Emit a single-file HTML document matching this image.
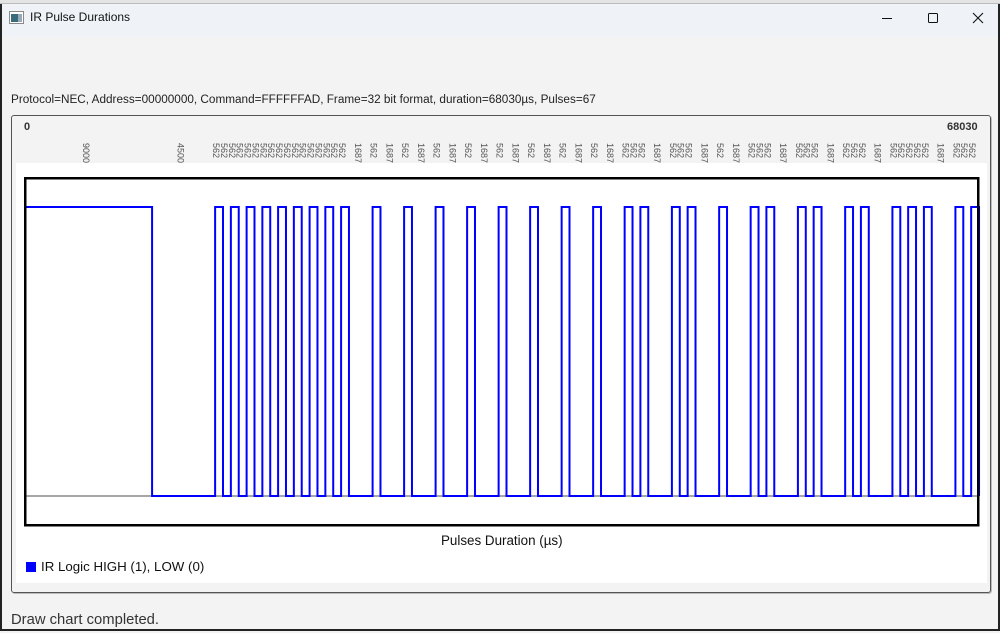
<!DOCTYPE html>
<html><head><meta charset="utf-8"><style>
html,body{margin:0;padding:0;}
body{width:1000px;height:633px;position:relative;overflow:hidden;background:#f3f3f3;font-family:"Segoe UI","Liberation Sans",sans-serif;}
.win{position:absolute;left:0;top:0;width:996px;height:629px;border:2px solid #222;border-top:none;background:#f3f3f3;}
.title{position:absolute;left:2px;top:0;width:996px;height:37px;background:#eff3f7;}
.abs{position:absolute;white-space:nowrap;}
</style></head><body>
<div class="win"></div>
<div class="title"></div>
<div class="abs" style="left:0;top:0;width:1000px;height:3px;background:#e4e4e4;border-bottom:1px solid #bbb"></div>
<svg class="abs" style="left:9px;top:11px" width="16" height="14"><rect x="0.5" y="0.5" width="14" height="12" fill="#fff" stroke="#8a8a8a"/><rect x="2" y="3" width="7" height="8" fill="#3a6b7a"/><rect x="9" y="3" width="4" height="8" fill="#9ab"/></svg>
<div class="abs" style="left:30px;top:10px;font-size:12px;color:#111">IR Pulse Durations</div>
<svg class="abs" style="left:870px;top:0" width="128" height="37">
<line x1="12" y1="18.5" x2="22" y2="18.5" stroke="#111" stroke-width="1"/>
<rect x="58.5" y="13.5" width="9" height="9" rx="1" fill="none" stroke="#111"/>
<path d="M103 13L113 23M113 13L103 23" stroke="#111" stroke-width="1.1"/>
</svg>
<div class="abs" style="left:11px;top:93px;font-size:11.75px;color:#222">Protocol=NEC, Address=00000000, Command=FFFFFFAD, Frame=32 bit format, duration=68030µs, Pulses=67</div>
<div class="abs" style="left:11px;top:115px;width:978px;height:476px;border:1px solid #555;border-radius:3px;box-shadow:1px 1px 0 #bbb"></div>
<div class="abs" style="left:16px;top:163px;width:971px;height:420px;background:#fff"></div>
<div class="abs" style="left:24px;top:121px;font-size:11px;font-weight:bold;color:#333">0</div>
<div class="abs" style="left:947px;top:121px;font-size:11px;font-weight:bold;color:#333">68030</div>
<svg class="abs" style="left:0;top:0" width="1000" height="633">
<g font-family="Liberation Sans, sans-serif" font-size="9" fill="#555">
<text transform="translate(83,143) rotate(90)">9000</text>
<text transform="translate(177.6,143) rotate(90)">4500</text>
<text transform="translate(213.1,143) rotate(90)">562</text><text transform="translate(220.9,143) rotate(90)">562</text>
<text transform="translate(228.8,143) rotate(90)">562</text><text transform="translate(236.7,143) rotate(90)">562</text>
<text transform="translate(244.5,143) rotate(90)">562</text><text transform="translate(252.4,143) rotate(90)">562</text>
<text transform="translate(260.3,143) rotate(90)">562</text><text transform="translate(268.2,143) rotate(90)">562</text>
<text transform="translate(276,143) rotate(90)">562</text><text transform="translate(283.9,143) rotate(90)">562</text>
<text transform="translate(291.8,143) rotate(90)">562</text><text transform="translate(299.7,143) rotate(90)">562</text>
<text transform="translate(307.5,143) rotate(90)">562</text><text transform="translate(315.4,143) rotate(90)">562</text>
<text transform="translate(323.3,143) rotate(90)">562</text><text transform="translate(331.2,143) rotate(90)">562</text>
<text transform="translate(339,143) rotate(90)">562</text><text transform="translate(354.8,143) rotate(90)">1687</text>
<text transform="translate(370.5,143) rotate(90)">562</text><text transform="translate(386.3,143) rotate(90)">1687</text>
<text transform="translate(402,143) rotate(90)">562</text><text transform="translate(417.8,143) rotate(90)">1687</text>
<text transform="translate(433.5,143) rotate(90)">562</text><text transform="translate(449.3,143) rotate(90)">1687</text>
<text transform="translate(465,143) rotate(90)">562</text><text transform="translate(480.8,143) rotate(90)">1687</text>
<text transform="translate(496.6,143) rotate(90)">562</text><text transform="translate(512.3,143) rotate(90)">1687</text>
<text transform="translate(528.1,143) rotate(90)">562</text><text transform="translate(543.8,143) rotate(90)">1687</text>
<text transform="translate(559.6,143) rotate(90)">562</text><text transform="translate(575.3,143) rotate(90)">1687</text>
<text transform="translate(591.1,143) rotate(90)">562</text><text transform="translate(606.8,143) rotate(90)">1687</text>
<text transform="translate(622.6,143) rotate(90)">562</text><text transform="translate(630.5,143) rotate(90)">562</text>
<text transform="translate(638.3,143) rotate(90)">562</text><text transform="translate(654.1,143) rotate(90)">1687</text>
<text transform="translate(669.8,143) rotate(90)">562</text><text transform="translate(677.7,143) rotate(90)">562</text>
<text transform="translate(685.6,143) rotate(90)">562</text><text transform="translate(701.3,143) rotate(90)">1687</text>
<text transform="translate(717.1,143) rotate(90)">562</text><text transform="translate(732.8,143) rotate(90)">1687</text>
<text transform="translate(748.6,143) rotate(90)">562</text><text transform="translate(756.5,143) rotate(90)">562</text>
<text transform="translate(764.3,143) rotate(90)">562</text><text transform="translate(780.1,143) rotate(90)">1687</text>
<text transform="translate(795.8,143) rotate(90)">562</text><text transform="translate(803.7,143) rotate(90)">562</text>
<text transform="translate(811.6,143) rotate(90)">562</text><text transform="translate(827.3,143) rotate(90)">1687</text>
<text transform="translate(843.1,143) rotate(90)">562</text><text transform="translate(851,143) rotate(90)">562</text>
<text transform="translate(858.8,143) rotate(90)">562</text><text transform="translate(874.6,143) rotate(90)">1687</text>
<text transform="translate(890.4,143) rotate(90)">562</text><text transform="translate(898.2,143) rotate(90)">562</text>
<text transform="translate(906.1,143) rotate(90)">562</text><text transform="translate(914,143) rotate(90)">562</text>
<text transform="translate(921.8,143) rotate(90)">562</text><text transform="translate(937.6,143) rotate(90)">1687</text>
<text transform="translate(953.3,143) rotate(90)">562</text><text transform="translate(961.2,143) rotate(90)">562</text>
<text transform="translate(969.1,143) rotate(90)">562</text>
</g>
<rect x="16" y="163" width="971" height="10" fill="#fff"/>
<line x1="26" y1="496" x2="978" y2="496" stroke="#888" stroke-width="1.5"/>
<g transform="translate(26,0) scale(0.014009,1)">
<path vector-effect="non-scaling-stroke" fill="none" stroke="#0000ff" stroke-width="2" d="M0 207H9000V496H13500
V207h562V496h562 V207h562V496h562 V207h562V496h562 V207h562V496h562 V207h562V496h562 V207h562V496h562 V207h562V496h562 V207h562V496h562
V207h562V496h1687 V207h562V496h1687 V207h562V496h1687 V207h562V496h1687 V207h562V496h1687 V207h562V496h1687 V207h562V496h1687 V207h562V496h1687
V207h562V496h1687 V207h562V496h562 V207h562V496h1687 V207h562V496h562 V207h562V496h1687 V207h562V496h1687 V207h562V496h562 V207h562V496h1687
V207h562V496h562 V207h562V496h1687 V207h562V496h562 V207h562V496h1687 V207h562V496h562 V207h562V496h562 V207h562V496h1687 V207h562V496h562
V207h562V496"/>
</g>
<rect x="25.25" y="178.25" width="953" height="347" fill="none" stroke="#000" stroke-width="2.5"/>
<rect x="26" y="562" width="10" height="10" fill="#0000ff"/>
</svg>
<div class="abs" style="left:441px;top:533px;font-size:13.4px;color:#111">Pulses Duration (µs)</div>
<div class="abs" style="left:41px;top:559px;font-size:13.3px;color:#111">IR Logic HIGH (1), LOW (0)</div>
<div class="abs" style="left:11px;top:612px;font-size:14.8px;color:#333">Draw chart completed.</div>
</body></html>
